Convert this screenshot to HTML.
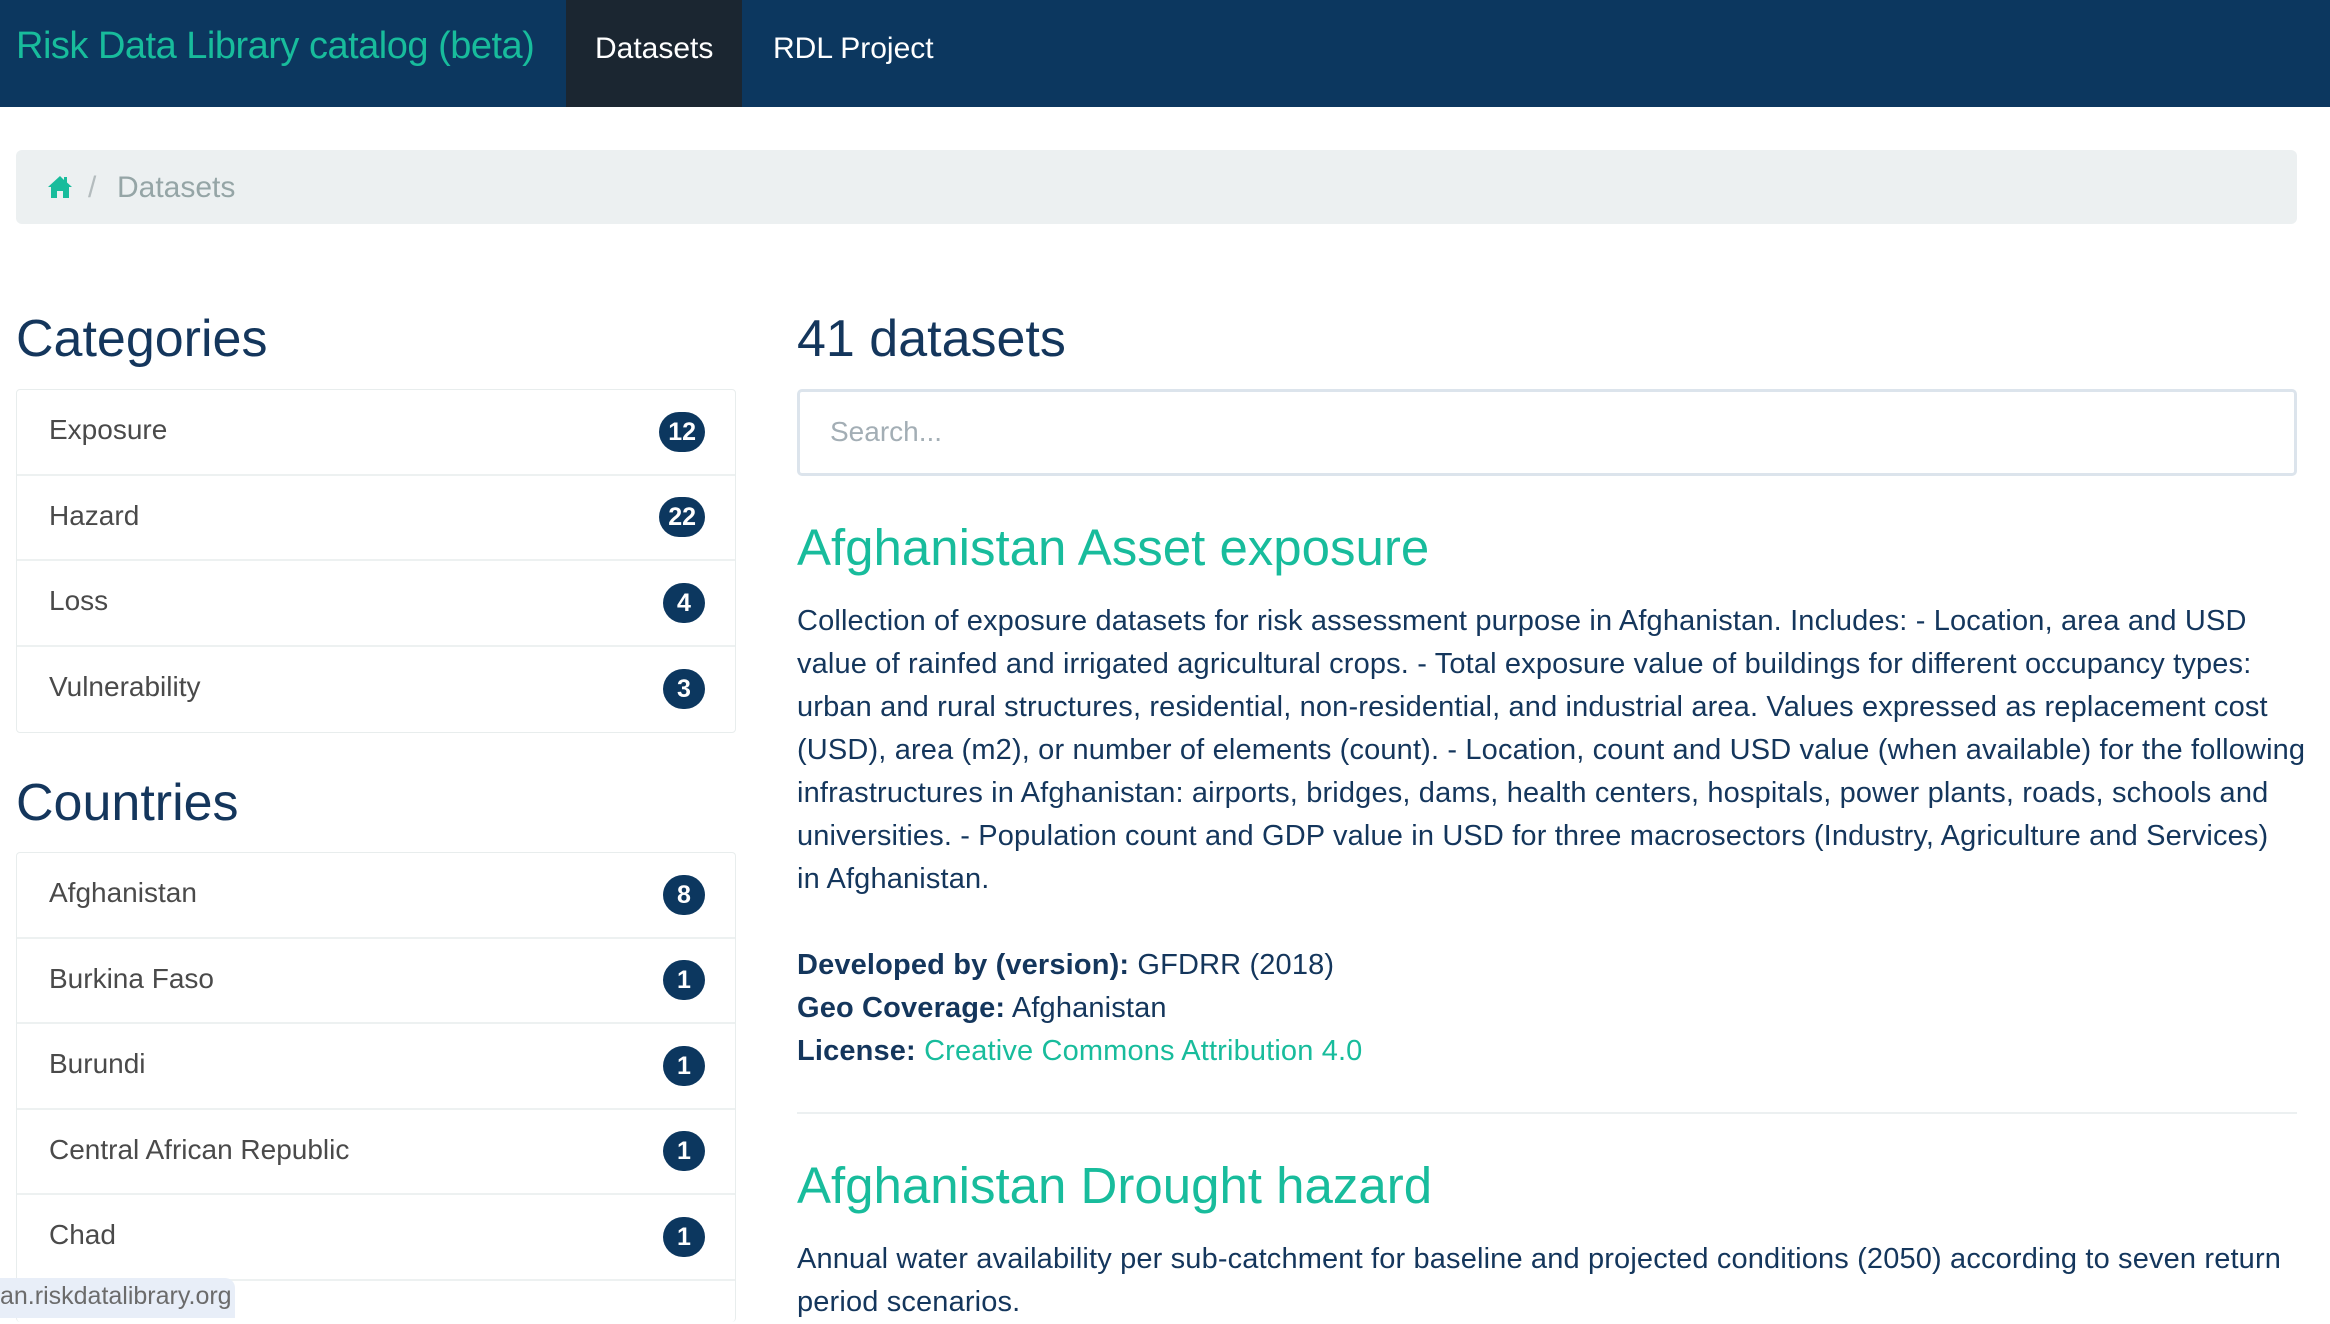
<!DOCTYPE html>
<html><head><meta charset="utf-8"><style>
*{box-sizing:border-box;margin:0;padding:0}
body{width:2330px;height:1310px;overflow:hidden;background:#fff;font-family:"Liberation Sans",sans-serif;position:relative;color:#14365c}
.a{position:absolute;white-space:nowrap}
.nav{position:absolute;left:0;top:0;width:2330px;height:107px;background:#0c375f}
.badge{position:absolute;right:30px;top:50%;transform:translateY(-50%);background:#0c375f;color:#fff;font-weight:bold;font-size:25px;height:40px;min-width:42px;padding:0 9px;border-radius:20px;text-align:center;line-height:40px}
.lg{position:absolute;left:16px;width:720px;border:1px solid #e8eded;border-radius:4px}
.li{position:relative;height:85.5px;border-bottom:2px solid #edf1f1;font-size:28px;color:#4a4a4a;padding-left:32px;line-height:80px}
.li:last-child{border-bottom:none}
.p{font-size:29px;line-height:43px;color:#14365c;letter-spacing:0.15px}
h2{font-weight:normal;font-size:52px;color:#14365c}
.t{font-size:51px;color:#18bc9c}
</style></head><body>
<div class="nav"></div>
<div class="a" style="left:16px;top:25px;font-size:38px;color:#18bc9c;letter-spacing:-0.5px">Risk Data Library catalog (beta)</div>
<div class="a" style="left:566px;top:0;width:176px;height:107px;background:#1b2631"></div>
<div class="a" style="left:595px;top:32px;font-size:30px;color:#fff">Datasets</div>
<div class="a" style="left:773px;top:32px;font-size:30px;color:#fff">RDL Project</div>

<div class="a" style="left:16px;top:150px;width:2281px;height:74px;background:#ecf0f1;border-radius:6px"></div>
<svg class="a" style="left:47px;top:175px" width="26" height="24" viewBox="0 0 26 24"><path d="M13 1 L1 12 L4 12 L4 23 L10 23 L10 16 L16 16 L16 23 L22 23 L22 12 L25 12 L20 7.5 L20 2 L17 2 L17 5 Z" fill="#18bc9c"/></svg>
<div class="a" style="left:88px;top:171px;font-size:30px;color:#b4bcbe">/</div>
<div class="a" style="left:117px;top:171px;font-size:30px;color:#95a5a6">Datasets</div>

<h2 class="a" style="left:16px;top:309px">Categories</h2>
<div class="lg" style="top:389px">
<div class="li">Exposure<span class="badge">12</span></div>
<div class="li">Hazard<span class="badge">22</span></div>
<div class="li">Loss<span class="badge">4</span></div>
<div class="li">Vulnerability<span class="badge">3</span></div>
</div>
<h2 class="a" style="left:16px;top:773px">Countries</h2>
<div class="lg" style="top:852px;height:470px;border-bottom:none">
<div class="li">Afghanistan<span class="badge">8</span></div>
<div class="li">Burkina Faso<span class="badge">1</span></div>
<div class="li">Burundi<span class="badge">1</span></div>
<div class="li">Central African Republic<span class="badge">1</span></div>
<div class="li" style="border-bottom:2px solid #edf1f1">Chad<span class="badge">1</span></div>
</div>

<h2 class="a" style="left:797px;top:309px">41 datasets</h2>
<div class="a" style="left:797px;top:389px;width:1500px;height:87px;border:3px solid #dce4ec;border-radius:5px"></div>
<div class="a" style="left:830px;top:416px;font-size:28px;color:#a3aeb5">Search...</div>

<div class="a t" style="left:797px;top:518px">Afghanistan Asset exposure</div>
<div class="a p" style="left:797px;top:600px">Collection of exposure datasets for risk assessment purpose in Afghanistan. Includes: - Location, area and USD<br>value of rainfed and irrigated agricultural crops. - Total exposure value of buildings for different occupancy types:<br>urban and rural structures, residential, non-residential, and industrial area. Values expressed as replacement cost<br>(USD), area (m2), or number of elements (count). - Location, count and USD value (when available) for the following<br>infrastructures in Afghanistan: airports, bridges, dams, health centers, hospitals, power plants, roads, schools and<br>universities. - Population count and GDP value in USD for three macrosectors (Industry, Agriculture and Services)<br>in Afghanistan.</div>
<div class="a p" style="left:797px;top:944px"><b>Developed by (version):</b> GFDRR (2018)<br><b>Geo Coverage:</b> Afghanistan<br><b>License:</b> <span style="color:#18bc9c">Creative Commons Attribution 4.0</span></div>
<div class="a" style="left:797px;top:1112px;width:1500px;height:2px;background:#ecf0f1"></div>
<div class="a t" style="left:797px;top:1156px">Afghanistan Drought hazard</div>
<div class="a p" style="left:797px;top:1238px">Annual water availability per sub-catchment for baseline and projected conditions (2050) according to seven return<br>period scenarios.</div>

<div class="a" style="left:0;top:1278px;width:235px;height:40px;background:#e8eef8;border-top-right-radius:10px;font-size:25px;color:#6b6b6b;padding-top:4px;overflow:hidden">an.riskdatalibrary.org</div>
</body></html>
